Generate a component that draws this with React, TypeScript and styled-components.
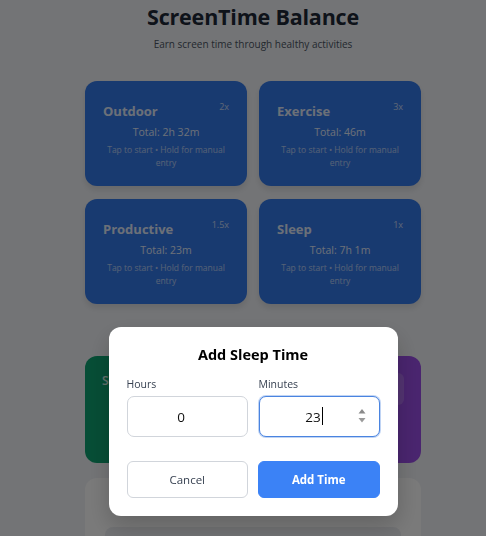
import React, { useEffect, useRef, useState } from "react";
import styled, { createGlobalStyle } from "styled-components";

const GlobalStyle = createGlobalStyle`
  * { box-sizing: border-box; }
  html, body { margin: 0; padding: 0; }
  body {
    background: #f1f3f7;
    font-family: "Open Sans", "Noto Sans", Arial, sans-serif;
    color: #1f2937;
    overflow: hidden;
  }
`;

const Page = styled.div`
  padding: 1px 0 0 20px;
  min-height: 536px;
`;

const Container = styled.div`
  width: 336px;
  margin: 0 auto;
`;

const Header = styled.header`
  text-align: center;
`;

const Title = styled.h1`
  margin: 0;
  font-size: 21.5px;
  line-height: 32px;
  font-weight: 700;
  color: #1f2937;
  letter-spacing: -0.2px;
`;

const Subtitle = styled.p`
  margin: 3px 0 0;
  font-size: 10px;
  line-height: 16px;
  color: #4b5563;
`;

const Grid = styled.div<{ $top: number }>`
  display: grid;
  grid-template-columns: 1fr 1fr;
  gap: 13px 12px;
  margin-top: ${(p) => p.$top}px;
`;

const ActivityCard = styled.div`
  background: #3479ea;
  border-radius: 12px;
  min-height: 105px;
  padding: 20px 18px 14px;
  color: #fff;
  box-shadow: 0 4px 6px rgba(0, 0, 0, 0.1);
`;

const CardHead = styled.div`
  display: flex;
  justify-content: space-between;
  align-items: flex-start;
`;

const CardName = styled.span`
  font-size: 13px;
  line-height: 20px;
  font-weight: 700;
  opacity: 0.85;
`;

const Multiplier = styled.span`
  font-size: 9px;
  line-height: 12px;
  opacity: 0.7;
`;

const Total = styled.div`
  margin-top: 2px;
  text-align: center;
  font-size: 10.5px;
  line-height: 18px;
  opacity: 0.85;
`;

const Hint = styled.div`
  margin-top: 2px;
  text-align: center;
  font-size: 8.5px;
  line-height: 13px;
  opacity: 0.62;
`;

const StatCard = styled.div<{ $bg: string }>`
  background: ${(p) => p.$bg};
  border-radius: 12px;
  height: 107px;
  padding: 17px;
  color: #fff;
`;

const StatHead = styled.div`
  display: flex;
  justify-content: space-between;
  align-items: flex-start;
`;

const StatTitle = styled.span`
  font-size: 12px;
  line-height: 16px;
  font-weight: 600;
  opacity: 0.8;
`;

const StatButton = styled.span`
  background: rgba(255, 255, 255, 0.18);
  border-radius: 6px;
  height: 32px;
  padding: 0 12px;
  display: flex;
  align-items: center;
  font-size: 11px;
  font-weight: 600;
`;

const StatValue = styled.div`
  margin-top: 14px;
  text-align: center;
  font-size: 22px;
  font-weight: 700;
`;

const Panel = styled.section`
  margin-top: 15px;
  background: #fff;
  border-radius: 12px;
  padding: 17px 20px 20px;
  height: 200px;
`;

const PanelTitle = styled.h2`
  margin: 0 0 16px;
  text-align: center;
  font-size: 13px;
  line-height: 16px;
  font-weight: 600;
  color: #1f2937;
`;

const PanelRow = styled.div`
  background: #eceef2;
  border-radius: 8px;
  height: 44px;
`;

const Overlay = styled.div`
  position: fixed;
  inset: 0;
  background: rgba(0, 0, 0, 0.52);
  display: flex;
  justify-content: center;
  align-items: flex-end;
  padding: 0 0 20px 20px;
`;

const Modal = styled.div`
  width: 289px;
  background: #fff;
  border-radius: 12px;
  padding: 18px;
  box-shadow: 0 10px 25px rgba(0, 0, 0, 0.2);
`;

const ModalTitle = styled.h3`
  margin: 0 0 12px;
  text-align: center;
  font-size: 14.5px;
  line-height: 20px;
  font-weight: 700;
  color: #000;
`;

const Fields = styled.div`
  display: grid;
  grid-template-columns: 1fr 1fr;
  gap: 11px;
`;

const Field = styled.label`
  display: block;
`;

const FieldLabel = styled.span`
  display: block;
  font-size: 10.5px;
  line-height: 14px;
  color: #374151;
  margin-bottom: 5px;
`;

const InputWrap = styled.div`
  position: relative;
`;

const NumberInput = styled.input<{ $focused?: boolean }>`
  width: 100%;
  height: 41px;
  border-radius: 7px;
  border: 1px solid ${(p) => (p.$focused ? "#4a84e0" : "#d1d5db")};
  box-shadow: ${(p) => (p.$focused ? "0 0 0 1px rgba(74,132,224,0.35)" : "none")};
  padding: 0 24px 0 12px;
  font-family: inherit;
  font-size: 13.5px;
  color: #111;
  text-align: center;
  background: #fff;
  outline: none;
  caret-color: transparent;
`;

const Caret = styled.span`
  position: absolute;
  left: 63px;
  top: 11px;
  width: 1px;
  height: 18px;
  background: #000;
  pointer-events: none;
`;

const Spinner = styled.svg`
  position: absolute;
  right: 14px;
  top: 12px;
  pointer-events: none;
`;

const Actions = styled.div`
  margin-top: 24px;
  display: grid;
  grid-template-columns: 1fr 1fr;
  gap: 10px;
`;

const Button = styled.button<{ $primary?: boolean }>`
  height: 37px;
  border-radius: 6px;
  font-family: inherit;
  font-size: 11.5px;
  font-weight: ${(p) => (p.$primary ? 700 : 500)};
  color: ${(p) => (p.$primary ? "#fff" : "#374151")};
  background: ${(p) => (p.$primary ? "#3b82f6" : "#fff")};
  border: 1px solid ${(p) => (p.$primary ? "#3b82f6" : "#d1d5db")};
  cursor: pointer;
`;

const activities = [
  { name: "Outdoor", mult: "2x", total: "2h 32m" },
  { name: "Exercise", mult: "3x", total: "46m" },
  { name: "Productive", mult: "1.5x", total: "23m" },
  { name: "Sleep", mult: "1x", total: "7h 1m" },
];

export default function App() {
  const [hours, setHours] = useState("0");
  const [minutes, setMinutes] = useState("23");
  const minRef = useRef<HTMLInputElement>(null);

  useEffect(() => {
    const el = minRef.current;
    if (el) {
      el.focus();
      el.setSelectionRange(el.value.length, el.value.length);
    }
  }, []);

  return (
    <>
      <GlobalStyle />
      <Page>
        <Container>
          <Header>
            <Title>ScreenTime Balance</Title>
            <Subtitle>Earn screen time through healthy activities</Subtitle>
          </Header>

          <Grid $top={29}>
            {activities.map((a) => (
              <ActivityCard key={a.name}>
                <CardHead>
                  <CardName>{a.name}</CardName>
                  <Multiplier>{a.mult}</Multiplier>
                </CardHead>
                <Total>Total: {a.total}</Total>
                <Hint>Tap to start • Hold for manual entry</Hint>
              </ActivityCard>
            ))}
          </Grid>

          <Grid $top={52}>
            <StatCard $bg="#0ea271">
              <StatHead>
                <StatTitle>Screen Time Earned</StatTitle>
              </StatHead>
              <StatValue>4h 12m</StatValue>
            </StatCard>
            <StatCard $bg="#9b4ee8">
              <StatHead>
                <StatTitle>Used Today</StatTitle>
                <StatButton>Use</StatButton>
              </StatHead>
              <StatValue>1h 5m</StatValue>
            </StatCard>
          </Grid>

          <Panel>
            <PanelTitle>Today's Summary</PanelTitle>
            <PanelRow />
          </Panel>
        </Container>
      </Page>

      <Overlay>
        <Modal>
          <ModalTitle>Add Sleep Time</ModalTitle>
          <Fields>
            <Field>
              <FieldLabel>Hours</FieldLabel>
              <InputWrap>
                <NumberInput
                  type="text"
                  inputMode="numeric"
                  value={hours}
                  onChange={(e) => setHours(e.target.value)}
                />
              </InputWrap>
            </Field>
            <Field>
              <FieldLabel>Minutes</FieldLabel>
              <InputWrap>
                <NumberInput
                  ref={minRef}
                  $focused
                  type="text"
                  inputMode="numeric"
                  value={minutes}
                  onChange={(e) => setMinutes(e.target.value)}
                />
                <Caret />
                <Spinner width="8" height="16" viewBox="0 0 8 16">
                  <path d="M4 1 L7.5 5.5 L0.5 5.5 Z" fill="#8a8a8a" />
                  <path d="M4 14.5 L7.5 10 L0.5 10 Z" fill="#9a9a9a" />
                </Spinner>
              </InputWrap>
            </Field>
          </Fields>
          <Actions>
            <Button>Cancel</Button>
            <Button $primary>Add Time</Button>
          </Actions>
        </Modal>
      </Overlay>
    </>
  );
}
